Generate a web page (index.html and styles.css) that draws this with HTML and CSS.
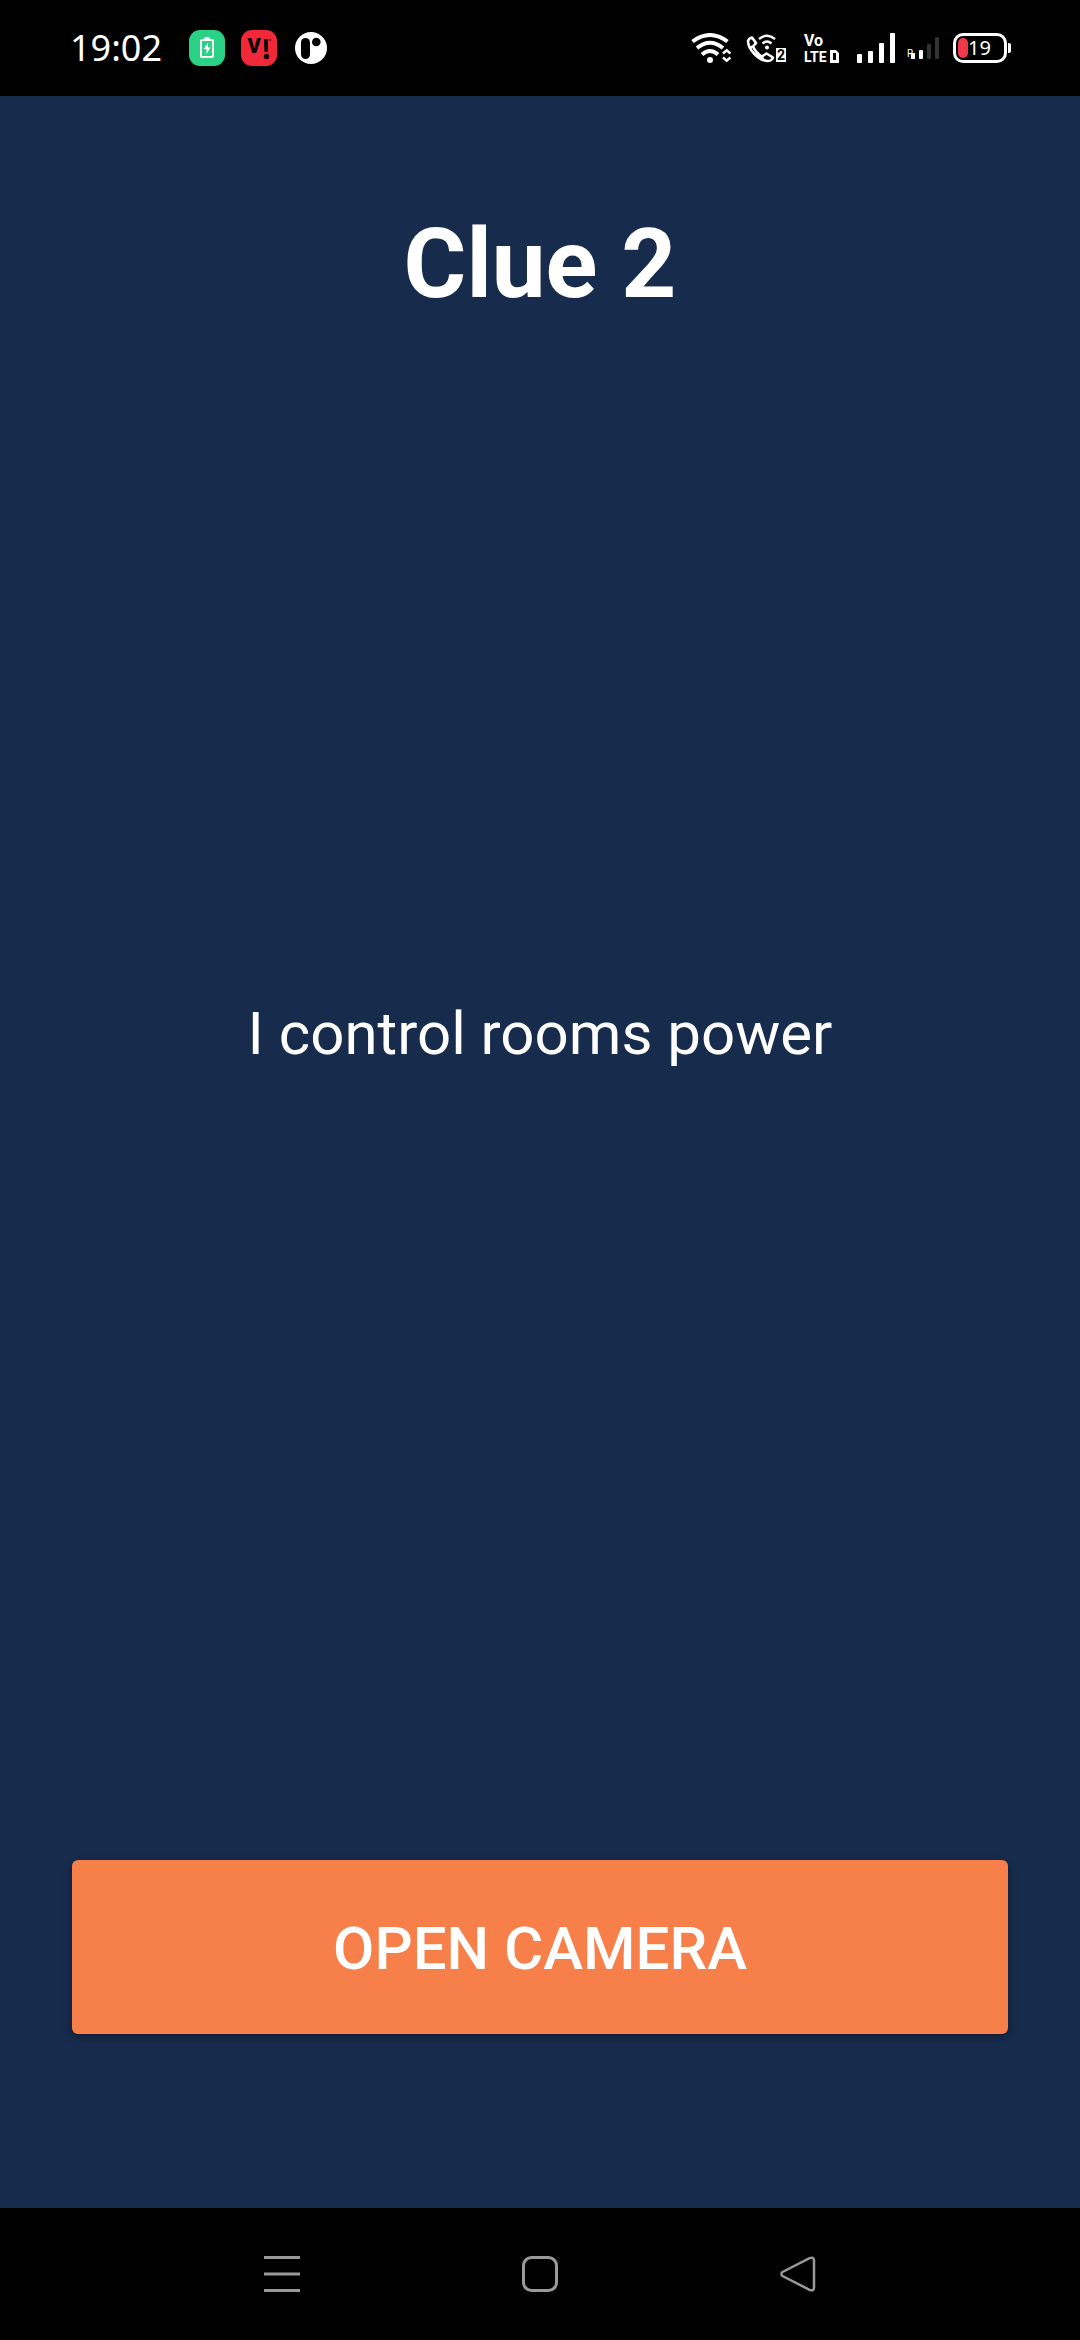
FILE: index.html
```html
<!DOCTYPE html>
<html lang="en">
<head>
<meta charset="utf-8">
<meta name="viewport" content="width=device-width, initial-scale=1">
<title>Clue 2</title>
<link rel="stylesheet" href="styles.css">
</head>
<body>
<header class="status-bar">
  <div class="status-left">
    <span class="clock">19:02</span>
    <svg width="36" height="36" viewBox="0 0 36 36" role="img" aria-label="Charging app">
      <rect width="36" height="36" rx="11" fill="#2bd184"/>
      <path d="M15.500 7h5v2.500h-5z" fill="#fff"/>
      <rect x="12" y="10" width="12" height="17" rx="1" fill="none" stroke="#fff" stroke-width="2"/>
      <path d="M19 13l-4.500 6h3v5l4-6.500h-2.500z" fill="#fff"/>
    </svg>
    <svg width="36" height="36" viewBox="0 0 36 36" role="img" aria-label="Vi">
      <rect width="36" height="36" rx="11" fill="#f02837"/>
      <text class="vi-letter" x="13" y="23" text-anchor="middle">V</text>
      <path d="M23 9h4v13h-3.500zM28 9h2v1.500h-2z" fill="#0a0000"/>
      <circle cx="25.500" cy="26.500" r="2.700" fill="#0a0000"/>
    </svg>
    <svg width="36" height="36" viewBox="0 0 36 36" role="img" aria-label="App notification">
      <circle cx="18" cy="18" r="16" fill="#fff"/>
      <rect x="8" y="8" width="9" height="21" rx="4.500" fill="#000"/>
      <circle cx="23.300" cy="12" r="4.300" fill="#000"/>
    </svg>
  </div>
  <div class="status-right">
    <svg width="48" height="30" viewBox="0 0 48 30" role="img" aria-label="Wi-Fi">
      <g fill="none" stroke="#fff" stroke-width="4">
        <path d="M2.500 8.500Q20-4.500 37.500 8.500"/>
        <path d="M7 15Q20 4.500 33 15"/>
        <path d="M12 21.500Q20 14.500 28 21.500"/>
        <path d="M33 20.500l3.700-3.200 3.700 3.200M33 24.500l3.700 3.200 3.700-3.200" stroke-width="2.500"/>
      </g>
      <circle cx="20" cy="27" r="3" fill="#fff"/>
    </svg>
    <svg width="49" height="30" viewBox="0 0 49 30" role="img" aria-label="Wi-Fi calling, SIM 2">
      <g fill="none" stroke="#fff" stroke-width="2.600" stroke-linejoin="round">
        <path d="M2 8Q3 5 6 4.500L10 10L7 13.500Q10 20 16 23.500L20.500 20.500L27 24.500Q26 28 21 28Q14 27 8 20.500Q2 14 2 8Z"/>
        <path d="M7 13.500L4.500 14.500M16 23.500L17 27"/>
        <path d="M13 6Q21-.5 29 6M16.500 10.500Q21 6.500 25.500 10.500" stroke-width="2.400"/>
      </g>
      <circle cx="21" cy="14.500" r="2" fill="#fff"/>
      <rect x="30" y="15" width="10" height="14" fill="#fff"/>
      <text class="sim-number" x="35" y="27" text-anchor="middle">2</text>
    </svg>
    <svg width="46" height="36" viewBox="0 -3 46 36" role="img" aria-label="VoLTE">
      <text class="volte-top" x="1" y="13">Vo</text>
      <text class="volte" x="1" y="29">LTE</text>
      <path fill="#fff" fill-rule="evenodd" d="M27 17h6l3 3v10h-9zM30 20h3v7h-3z"/>
    </svg>
    <svg width="40" height="30" viewBox="0 0 40 30" role="img" aria-label="Signal, SIM 1">
      <g fill="#fff">
        <rect y="21" width="5" height="9" rx="1"/>
        <rect x="11" y="18" width="5" height="12" rx="1"/>
        <rect x="22" y="10" width="5" height="20" rx="1"/>
        <rect x="33" width="5" height="30" rx="1"/>
      </g>
    </svg>
    <svg width="40" height="30" viewBox="0 0 40 30" role="img" aria-label="Signal, SIM 2, roaming">
      <text class="roaming" x="2" y="24">R</text>
      <rect x="6" y="20" width="4" height="6" fill="#fff"/>
      <rect x="14" y="17" width="4" height="9" rx="1" fill="#fff"/>
      <rect x="22" y="11" width="4" height="15" rx="1" fill="#333"/>
      <rect x="30" y="4" width="4" height="22" rx="1" fill="#333"/>
    </svg>
    <svg width="58" height="30" viewBox="0 0 58 30" role="img" aria-label="Battery 19 percent">
      <rect x="1.500" y="1.500" width="51" height="27" rx="8.500" fill="none" stroke="#fff" stroke-width="3"/>
      <rect x="5" y="5" width="10" height="20" rx="5" fill="#f0384b"/>
      <text class="battery-level" x="15" y="22">19</text>
      <path d="M55 10q3 0 3 2v6q0 2-3 2z" fill="#fff"/>
    </svg>
  </div>
</header>
<main class="clue-screen">
  <h1 class="clue-title">Clue 2</h1>
  <p class="clue-text">I control rooms power</p>
  <button class="camera-button" type="button">OPEN CAMERA</button>
</main>
<nav class="nav-bar" aria-label="System navigation">
  <button class="nav-button" type="button" aria-label="Recent apps">
    <svg width="36" height="36" viewBox="0 0 36 36"><path d="M0 1.500h36M0 18h36M0 34.500h36" stroke="#999" stroke-width="3"/></svg>
  </button>
  <button class="nav-button" type="button" aria-label="Home">
    <svg width="36" height="36" viewBox="0 0 36 36"><rect x="1.500" y="1.500" width="33" height="33" rx="8" fill="none" stroke="#999" stroke-width="3"/></svg>
  </button>
  <button class="nav-button" type="button" aria-label="Back">
    <svg width="36" height="36" viewBox="0 0 36 36"><path d="M2.500 16L29.500 2.200Q34 .5 34 4.500V31.500Q34 35.500 29.500 33.800L2.500 20Q.2 18 2.500 16Z" fill="none" stroke="#999" stroke-width="2.500"/></svg>
  </button>
</nav>
</body>
</html>
```
FILE: styles.css
```css
* {
  box-sizing: border-box;
}

body {
  margin: 0;
  min-height: 100vh;
  display: flex;
  flex-direction: column;
  background: #172b4d;
  color: #fff;
  font-family: Roboto, sans-serif;
}

svg {
  display: block;
}

.status-bar {
  height: 96px;
  padding: 0 69px 0 70px;
  display: flex;
  align-items: center;
  justify-content: space-between;
  background: #000;
}

.status-left,
.status-right {
  display: flex;
  align-items: center;
}

.status-left {
  gap: 16px;
}

.status-right {
  gap: 8px;
}

.clock {
  width: 103px;
  font: 400 36px/48px "Noto Sans", sans-serif;
}

.vi-letter {
  font: 900 20px Roboto, sans-serif;
  fill: #0a0000;
}

.sim-number {
  font: 700 14px Roboto, sans-serif;
  fill: #000;
}

.volte-top {
  font: 700 16px Roboto, sans-serif;
  fill: #fff;
}

.volte {
  font: 700 14px Roboto, sans-serif;
  fill: #fff;
}

.roaming {
  font: 400 10px Roboto, sans-serif;
  fill: #fff;
}

.battery-level {
  font: 400 20px "Noto Sans", sans-serif;
  fill: #fff;
}

.clue-screen {
  flex: 1;
  display: flex;
  flex-direction: column;
  padding: 112px 72px 174px;
}

.clue-title {
  margin: 0;
  font-size: 96px;
  line-height: 112px;
  font-weight: 700;
  text-align: center;
}

.clue-text {
  flex: 1;
  display: flex;
  align-items: center;
  justify-content: center;
  margin: 0;
  padding-bottom: 112px;
  font-size: 60px;
  line-height: 70px;
}

.camera-button {
  padding: 54px 24px 50px;
  border: 0;
  border-radius: 6px;
  background: #f77f49;
  box-shadow: 0 3px 8px rgba(0, 0, 0, 0.35);
  color: #fff;
  font: 500 60px/70px Roboto, sans-serif;
}

.nav-bar {
  height: 132px;
  display: flex;
  align-items: center;
  justify-content: center;
  gap: 22px;
  background: #000;
}

.nav-button {
  width: 236px;
  height: 132px;
  padding: 0;
  border: 0;
  display: flex;
  align-items: center;
  justify-content: center;
  background: none;
}
```
